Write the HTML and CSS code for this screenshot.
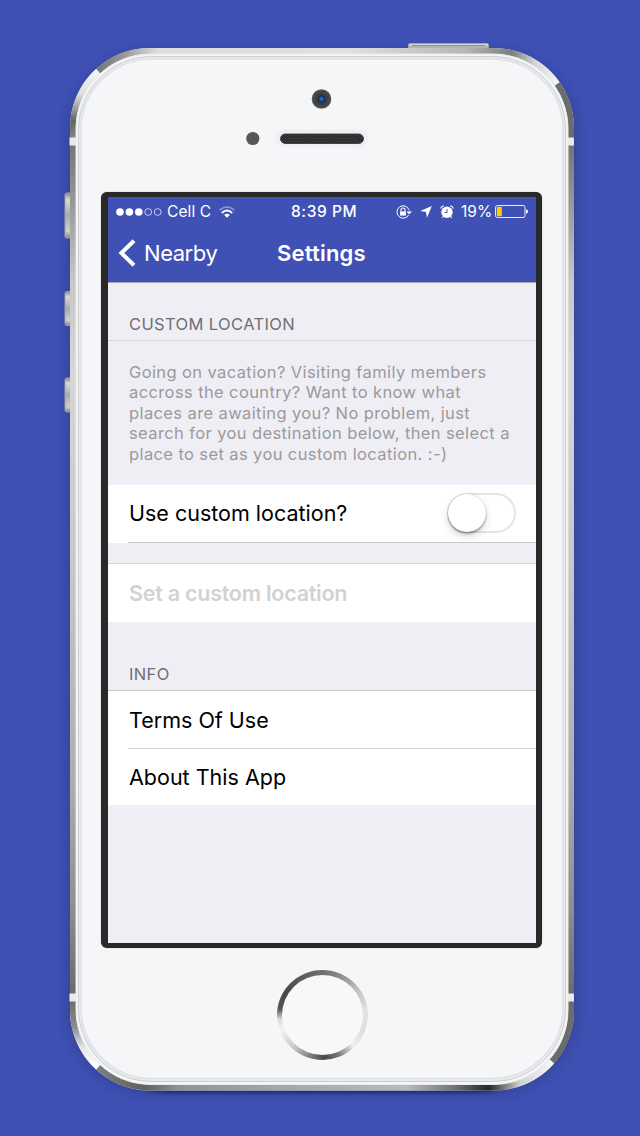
FILE: index.html
```html
<!DOCTYPE html>
<html lang="en">
<head>
<meta charset="utf-8">
<title>Settings</title>
<link rel="stylesheet" href="styles.css">
</head>
<body>
<main class="stage">
  <svg class="shell" viewBox="0 0 640 1136" aria-hidden="true">
    <defs>
      <linearGradient id="side" gradientUnits="userSpaceOnUse" x1="0" y1="145" x2="0" y2="993">
        <stop offset="0" stop-color="#747675"/><stop offset=".07" stop-color="#989a99"/><stop offset=".16" stop-color="#c6c8c7"/><stop offset=".27" stop-color="#d4d7d5"/><stop offset=".5" stop-color="#c6c8c7"/><stop offset=".75" stop-color="#acaeac"/><stop offset=".9" stop-color="#8d8f8d"/><stop offset="1" stop-color="#6a6c6b"/>
      </linearGradient>
      <linearGradient id="top" gradientUnits="userSpaceOnUse" x1="98" y1="0" x2="558" y2="0">
        <stop offset="0" stop-color="#777"/><stop offset=".05" stop-color="#929392"/><stop offset=".13" stop-color="#dcdedd"/><stop offset=".55" stop-color="#dfe1e0"/><stop offset=".8" stop-color="#b5b7b6"/><stop offset=".9" stop-color="#7c7e7d"/><stop offset=".95" stop-color="#d4d6d5"/><stop offset="1" stop-color="#f4f6f5"/>
      </linearGradient>
      <linearGradient id="bottom" gradientUnits="userSpaceOnUse" x1="98" y1="0" x2="552" y2="0">
        <stop offset="0" stop-color="#7d7f7e"/><stop offset=".1" stop-color="#5f6160"/><stop offset=".18" stop-color="#929493"/><stop offset=".4" stop-color="#a5a7a6"/><stop offset=".68" stop-color="#b9bbba"/><stop offset=".78" stop-color="#777"/><stop offset=".86" stop-color="#252726"/><stop offset=".93" stop-color="#d0d2d1"/><stop offset="1" stop-color="#f6f6f6"/>
      </linearGradient>
      <linearGradient id="tl" gradientUnits="userSpaceOnUse" x1="0" y1="70" x2="0" y2="138">
        <stop offset="0" stop-color="#f4f5f5"/><stop offset=".35" stop-color="#dedfdf"/><stop offset=".75" stop-color="#626463"/><stop offset="1" stop-color="#858786"/>
      </linearGradient>
      <linearGradient id="bl" gradientUnits="userSpaceOnUse" x1="0" y1="1001" x2="0" y2="1068">
        <stop offset="0" stop-color="#6c6e6d"/><stop offset=".4" stop-color="#8c8e8d"/><stop offset=".7" stop-color="#e6e7e7"/><stop offset="1" stop-color="#fff"/>
      </linearGradient>
      <linearGradient id="btn" x1="0" y1="0" x2="0" y2="1">
        <stop offset="0" stop-color="#858786"/><stop offset=".15" stop-color="#d8dad9"/><stop offset=".5" stop-color="#a9abaa"/><stop offset=".85" stop-color="#ced0cf"/><stop offset="1" stop-color="#858786"/>
      </linearGradient>
      <radialGradient id="lens" cx=".5" cy=".5" r=".5">
        <stop offset="0" stop-color="#2b8be0"/><stop offset=".18" stop-color="#1755a5"/><stop offset=".34" stop-color="#142c58"/><stop offset=".42" stop-color="#3b3b3b"/><stop offset=".9" stop-color="#4b4b4b"/><stop offset="1" stop-color="#686868"/>
      </radialGradient>
      <pattern id="mesh" width="3" height="3" patternUnits="userSpaceOnUse"><path fill="#292929" d="M0 0h3v3H0z"/><path fill="#505050" d="M0 0h1v1H0zM1.500 1.500h1v1h-1z"/></pattern>
      <filter id="blur" x="-20%" y="-20%" width="140%" height="140%"><feGaussianBlur stdDeviation="9"/></filter>
      <filter id="soft" x="-20%" y="-20%" width="140%" height="140%"><feGaussianBlur stdDeviation="2"/></filter>
    </defs>
    <rect x="70" y="54" width="504" height="1036" rx="80" fill="#16204f" opacity=".42" filter="url(#blur)"/>
    <rect x="88" y="70" width="468" height="1022" rx="80" fill="#10173c" opacity=".8" filter="url(#soft)"/>
    <g fill="url(#btn)" stroke="#a1a3a2" stroke-width="1">
      <rect x="65" y="193" width="8" height="45" rx="1.500"/>
      <rect x="65" y="291.500" width="8" height="34" rx="2"/>
      <rect x="65" y="378" width="8" height="34" rx="2"/>
      <rect x="408.500" y="43.500" width="80" height="7" rx="1.500"/>
    </g>
    <path d="M412 45.500h73" stroke="#8b908e"/>
    <rect x="70" y="48" width="504" height="1042.500" rx="80" fill="#e4e7e7"/>
    <g fill="none" stroke-width="6">
      <path stroke="url(#side)" d="M73 145V994M571 145V994"/>
      <path stroke="url(#tl)" d="M73 138V128A77 77 0 0 1 98.200 71"/>
      <path stroke="url(#top)" d="M98.200 71A77 77 0 0 1 149.500 51H494A77 77 0 0 1 557.200 84"/>
      <path stroke="#6b6d6c" d="M557.200 84A77 77 0 0 1 571 128V138M571 1001V1010A77 77 0 0 1 552 1061.500"/>
      <path stroke="url(#bl)" d="M73 1001V1010A77 77 0 0 0 98.200 1067.300"/>
      <path stroke="url(#bottom)" d="M98.200 1067.300A77 77 0 0 0 149.500 1087.500H494A77 77 0 0 0 552 1061.500"/>
    </g>
    <path fill="#e8eaf2" d="M69.500 137.500H76v8h-6.500zM568 137.500h6v8h-6zM69.500 993.500H76v8h-6.500zM568 993.500h6v8h-6z"/>
    <rect x="76" y="54" width="492" height="1030.500" rx="75" fill="#f5f7f7" stroke="#e9ecec"/>
    <rect x="78.500" y="56.500" width="487" height="1025" rx="73" fill="#e9eaee" stroke="#cbcdcf"/>
    <rect x="81" y="59" width="482" height="1019.500" rx="71" fill="#f4f6f8" stroke="#e0e1e6" stroke-width="1.500"/>
    <circle cx="321.500" cy="99" r="9.800" fill="url(#lens)"/>
    <circle cx="252.800" cy="138.500" r="6.600" fill="#575757"/>
    <rect x="275" y="129.500" width="93" height="18" rx="9" fill="#eeeff4"/>
    <rect x="280.500" y="134" width="83" height="9.500" rx="4.700" fill="url(#mesh)" stroke="#303030" stroke-width=".8"/>
  </svg>

  <section class="screen">
    <header class="nav">
      <div class="status">
        <svg class="signal" viewBox="0 0 46 8"><g fill="#fff"><circle cx="4" cy="4" r="3.800"/><circle cx="13.400" cy="4" r="3.800"/><circle cx="22.800" cy="4" r="3.800"/></g><g fill="none" stroke="#d3d7f0" stroke-width=".9"><circle cx="32.200" cy="4" r="3.400"/><circle cx="41.700" cy="4" r="3.400"/></g></svg>
        <span class="carrier">Cell C</span>
        <svg class="wifi" viewBox="0 0 16 12" fill="none"><path d="M.6 4.200Q8-2.400 15.400 4.200" stroke="#8c97d4" stroke-width="1.600"/><path d="M2.800 6.900Q8 2.200 13.200 6.900" stroke="#fff" stroke-width="2"/><path d="M5.200 9Q8 6.400 10.800 9L8 11.800z" fill="#fff"/></svg>
        <span class="time">8:39 PM</span>
        <svg class="lock" viewBox="0 0 16 14" fill="none" stroke="#fff"><path d="M12.700 9.800A6.200 6.200 0 1 1 12.900 4.600"/><path d="M13 4.500V7M10.800 6.700h4.800L13.200 9z" fill="#fff" stroke-width=".4"/><path d="M5 6.500V5a2 2 0 0 1 4 0v1.500" stroke-width="1.100"/><path d="M4.100 6.400h5.800v4.200H4.100z" fill="#fff" stroke="none"/></svg>
        <svg class="arrow" viewBox="0 0 12 12"><path d="M11.800 0 7 11.700 6 6 .2 5.100z" fill="#fff"/></svg>
        <svg class="alarm" viewBox="0 0 14 14" fill="none" stroke="#fff"><circle cx="7" cy="7.200" r="5.700" fill="#fff" stroke="none"/><path d="M.7 3.500Q1.300 1.200 3.900.8M13.300 3.500Q12.700 1.200 10.100.8M3.300 11.500 2.200 12.900M10.700 11.500 11.800 12.900" stroke-width="1.100"/><path d="M7 4v3.500H4.800" stroke="#4051b5" stroke-width="1"/></svg>
        <span class="percent">19%</span>
        <svg class="battery" viewBox="0 0 33 13"><rect x=".5" y=".5" width="29.500" height="12" rx="2" fill="none" stroke="#e8eaf7"/><path d="M31 4.300q2 .3 2 2.200t-2 2.200z" fill="#fff"/><path d="M1.800 1.800h5v9.400h-5z" fill="#ffcc00"/></svg>
      </div>
      <div class="bar">
        <svg class="chevron" viewBox="0 0 18 28"><path d="M16 1.800 3.400 14 16 26.200" fill="none" stroke="#fff" stroke-width="4"/></svg>
        <span class="back">Nearby</span>
        <h1 class="title">Settings</h1>
      </div>
    </header>

    <h2 class="heading heading-first">CUSTOM LOCATION</h2>
    <p class="note">Going on vacation? Visiting family members<br>accross the country? Want to know what<br>places are awaiting you? No problem, just<br>search for you destination below, then select a<br>place to set as you custom location. :-)</p>
    <div class="row row-toggle"><span class="use">Use custom location?</span><span class="switch"><span class="knob"></span></span></div>
    <div class="row row-set"><span class="placeholder">Set a custom location</span></div>
    <h2 class="heading heading-info">INFO</h2>
    <div class="row row-terms"><span class="terms">Terms Of Use</span></div>
    <div class="row row-about"><span class="about">About This App</span></div>
  </section>

  <div class="home"><div class="home-face"></div></div>
</main>
</body>
</html>
```
FILE: styles.css
```css
* { box-sizing: border-box; }
body { margin: 0; background: #4051b5; font-family: Inter, Roboto, sans-serif; }
.stage { position: relative; width: 640px; height: 1136px; padding: 192px 0 0 101px; overflow: hidden; }
.shell { position: absolute; left: 0; top: 0; width: 640px; height: 1136px; }
.screen { position: relative; width: 441px; height: 756px; border: solid #29292a; border-width: 5px 6px 5px 7px; border-radius: 6px; background: #efeef4; box-shadow: 0 0 1px #777; overflow: hidden; }
.nav { height: 86px; background: #4051b5; border-bottom: 1px solid #a9a9b6; color: #fff; }
.status { display: flex; align-items: center; height: 29px; padding-left: 8px; font-size: 15.500px; white-space: nowrap; }
.signal { width: 46px; height: 8px; }
.carrier { width: 49px; margin-left: 5px; letter-spacing: .1px; }
.wifi { width: 16px; height: 12px; margin-left: 3px; }
.time { width: 70px; margin-left: 56px; font-weight: 500; letter-spacing: .6px; }
.lock { width: 16px; height: 14px; margin-left: 35px; }
.arrow { width: 12px; height: 12px; margin-left: 8px; }
.alarm { width: 14px; height: 14px; margin-left: 8px; }
.percent { width: 31px; margin-left: 7px; }
.battery { width: 33px; height: 13px; margin-left: 3px; }
.bar { display: flex; align-items: center; height: 54px; padding-left: 10px; }
.chevron { width: 18px; height: 28px; }
.back { width: 85px; margin-left: 8px; font-size: 22px; letter-spacing: -.45px; }
.title { margin: 0 0 0 48px; font-size: 22px; font-weight: 600; letter-spacing: .2px; }
.heading { margin: 0; padding-left: 21px; font-size: 16.500px; font-weight: 400; letter-spacing: .37px; color: #6f6f74; line-height: 20px; }
.heading-first { height: 58px; padding-top: 31px; border-bottom: 1px solid #d6d5db; }
.heading-info { height: 69px; padding-top: 42px; border-bottom: 1px solid #c8c7cc; }
.note { margin: 0; height: 144px; padding: 21px 0 0 21px; font-size: 16.500px; line-height: 20.400px; letter-spacing: .39px; color: #9a9a9c; white-space: nowrap; }
.row { display: flex; align-items: center; background: #fff; color: #000; font-size: 21.500px; white-space: nowrap; }
.row-toggle { height: 58px; padding: 0 20px 2px 21px; justify-content: space-between; background: linear-gradient(#c8c7cc, #c8c7cc) 20px 100% / 100% 1px no-repeat #fff; }
.row-set { height: 59px; margin-top: 20px; padding: 0 0 1px 21px; border-top: 1px solid #d6d5db; }
.placeholder { color: #d2d2d4; font-weight: 600; letter-spacing: -.25px; }
.row-terms { height: 58px; padding-left: 21px; background: linear-gradient(#d2d1d6, #d2d1d6) 20px 100% / 100% 1px no-repeat #fff; }
.row-about { height: 56px; padding-left: 21px; }
.switch { width: 69px; height: 40px; border: 2px solid #e5e5e5; border-radius: 20px; }
.knob { display: block; width: 38px; height: 38px; margin: -1px; border-radius: 50%; background: #fff; box-shadow: 0 2px 2px rgba(0,0,0,.3), 0 4px 9px rgba(0,0,0,.16), 0 0 1px rgba(0,0,0,.25); }
.home { position: relative; width: 91px; height: 90px; margin: 22px 0 0 176px; padding: 5px; border-radius: 50%; background: conic-gradient(#707070, #8c8c8c 25deg, #bbb 50deg, #e4e4e4 85deg, #ddd 110deg, #f0f0f0 135deg, #777 158deg, #484848 178deg, #888 200deg, #c5c5c5 220deg, #f4f4f4 250deg, #ddd 264deg, #555 278deg, #484848 300deg, #707070); box-shadow: 0 0 2px #fff; }
.home-face { height: 100%; border-radius: 50%; background: #f6f8fa; }
```
